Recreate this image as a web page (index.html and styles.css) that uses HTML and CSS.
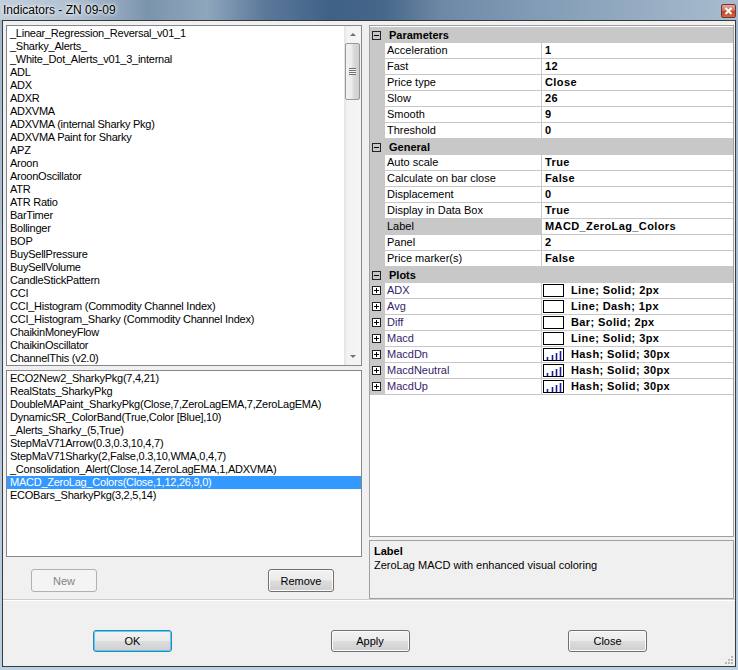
FILE: index.html
```html
<!DOCTYPE html>
<html>
<head>
    <meta charset="utf-8">
    <title>Indicators - ZN 09-09</title>
    <link rel="stylesheet" href="styles.css">
</head>
<body>
<div class="window">
    <div class="titlebar">
        <span class="title">Indicators - ZN 09-09</span>
        <span class="close-x">
            <svg width="15" height="14" viewBox="0 0 15 14"><path d="M4.5 4 L10.5 10 M10.5 4 L4.5 10" stroke="#fff" stroke-width="2"/></svg>
        </span>
    </div>
    <div class="client">
        <div class="panes">
            <div class="left">
                <div class="listbox available">
                    <div class="items">
                        <div class="item">_Linear_Regression_Reversal_v01_1</div>
                        <div class="item">_Sharky_Alerts_</div>
                        <div class="item">_White_Dot_Alerts_v01_3_internal</div>
                        <div class="item">ADL</div>
                        <div class="item">ADX</div>
                        <div class="item">ADXR</div>
                        <div class="item">ADXVMA</div>
                        <div class="item">ADXVMA (internal Sharky Pkg)</div>
                        <div class="item">ADXVMA Paint for Sharky</div>
                        <div class="item">APZ</div>
                        <div class="item">Aroon</div>
                        <div class="item">AroonOscillator</div>
                        <div class="item">ATR</div>
                        <div class="item">ATR Ratio</div>
                        <div class="item">BarTimer</div>
                        <div class="item">Bollinger</div>
                        <div class="item">BOP</div>
                        <div class="item">BuySellPressure</div>
                        <div class="item">BuySellVolume</div>
                        <div class="item">CandleStickPattern</div>
                        <div class="item">CCI</div>
                        <div class="item">CCI_Histogram (Commodity Channel Index)</div>
                        <div class="item">CCI_Histogram_Sharky (Commodity Channel Index)</div>
                        <div class="item">ChaikinMoneyFlow</div>
                        <div class="item">ChaikinOscillator</div>
                        <div class="item">ChannelThis (v2.0)</div>
                    </div>
                    <div class="vscroll">
                        <div class="arrow up"></div>
                        <div class="track">
                            <div class="thumb"><span class="grip"></span></div>
                        </div>
                        <div class="arrow down"></div>
                    </div>
                </div>
                <div class="listbox configured">
                    <div class="items">
                        <div class="item">ECO2New2_SharkyPkg(7,4,21)</div>
                        <div class="item">RealStats_SharkyPkg</div>
                        <div class="item">DoubleMAPaint_SharkyPkg(Close,7,ZeroLagEMA,7,ZeroLagEMA)</div>
                        <div class="item">DynamicSR_ColorBand(True,Color [Blue],10)</div>
                        <div class="item">_Alerts_Sharky_(5,True)</div>
                        <div class="item">StepMaV71Arrow(0.3,0.3,10,4,7)</div>
                        <div class="item">StepMaV71Sharky(2,False,0.3,10,WMA,0,4,7)</div>
                        <div class="item">_Consolidation_Alert(Close,14,ZeroLagEMA,1,ADXVMA)</div>
                        <div class="item selected">MACD_ZeroLag_Colors(Close,1,12,26,9,0)</div>
                        <div class="item">ECOBars_SharkyPkg(3,2,5,14)</div>
                    </div>
                </div>
                <div class="left-buttons">
                    <button class="btn disabled">New</button>
                    <button class="btn">Remove</button>
                </div>
            </div>

            <div class="right">
                <div class="grid">
                    <div class="cat">
                        <svg class="tog" width="9" height="9"><rect x="0.5" y="0.5" width="8" height="8" fill="none" stroke="#222"/><path d="M2 4.5h5" stroke="#000"/></svg>
                        <span>Parameters</span>
                    </div>
                    <div class="row"><span class="name">Acceleration</span><span class="val">1</span></div>
                    <div class="row"><span class="name">Fast</span><span class="val">12</span></div>
                    <div class="row"><span class="name">Price type</span><span class="val">Close</span></div>
                    <div class="row"><span class="name">Slow</span><span class="val">26</span></div>
                    <div class="row"><span class="name">Smooth</span><span class="val">9</span></div>
                    <div class="row"><span class="name">Threshold</span><span class="val">0</span></div>
                    <div class="cat">
                        <svg class="tog" width="9" height="9"><rect x="0.5" y="0.5" width="8" height="8" fill="none" stroke="#222"/><path d="M2 4.5h5" stroke="#000"/></svg>
                        <span>General</span>
                    </div>
                    <div class="row"><span class="name">Auto scale</span><span class="val">True</span></div>
                    <div class="row"><span class="name">Calculate on bar close</span><span class="val">False</span></div>
                    <div class="row"><span class="name">Displacement</span><span class="val">0</span></div>
                    <div class="row"><span class="name">Display in Data Box</span><span class="val">True</span></div>
                    <div class="row current"><span class="name">Label</span><span class="val">MACD_ZeroLag_Colors</span></div>
                    <div class="row"><span class="name">Panel</span><span class="val">2</span></div>
                    <div class="row"><span class="name">Price marker(s)</span><span class="val">False</span></div>
                    <div class="cat">
                        <svg class="tog" width="9" height="9"><rect x="0.5" y="0.5" width="8" height="8" fill="none" stroke="#222"/><path d="M2 4.5h5" stroke="#000"/></svg>
                        <span>Plots</span>
                    </div>
                    <div class="row plot">
                        <svg class="tog" width="9" height="9"><rect x="0.5" y="0.5" width="8" height="8" fill="#fff" stroke="#222"/><path d="M2 4.5h5M4.5 2v5" stroke="#000"/></svg>
                        <span class="name">ADX</span>
                        <span class="val"><svg class="swatch" width="21" height="13"><rect x="0.5" y="0.5" width="20" height="12" fill="#fff" stroke="#000"/></svg>Line; Solid; 2px</span>
                    </div>
                    <div class="row plot">
                        <svg class="tog" width="9" height="9"><rect x="0.5" y="0.5" width="8" height="8" fill="#fff" stroke="#222"/><path d="M2 4.5h5M4.5 2v5" stroke="#000"/></svg>
                        <span class="name">Avg</span>
                        <span class="val"><svg class="swatch" width="21" height="13"><rect x="0.5" y="0.5" width="20" height="12" fill="#fff" stroke="#000"/></svg>Line; Dash; 1px</span>
                    </div>
                    <div class="row plot">
                        <svg class="tog" width="9" height="9"><rect x="0.5" y="0.5" width="8" height="8" fill="#fff" stroke="#222"/><path d="M2 4.5h5M4.5 2v5" stroke="#000"/></svg>
                        <span class="name">Diff</span>
                        <span class="val"><svg class="swatch" width="21" height="13"><rect x="0.5" y="0.5" width="20" height="12" fill="#fff" stroke="#000"/></svg>Bar; Solid; 2px</span>
                    </div>
                    <div class="row plot">
                        <svg class="tog" width="9" height="9"><rect x="0.5" y="0.5" width="8" height="8" fill="#fff" stroke="#222"/><path d="M2 4.5h5M4.5 2v5" stroke="#000"/></svg>
                        <span class="name">Macd</span>
                        <span class="val"><svg class="swatch" width="21" height="13"><rect x="0.5" y="0.5" width="20" height="12" fill="#fff" stroke="#000"/></svg>Line; Solid; 3px</span>
                    </div>
                    <div class="row plot">
                        <svg class="tog" width="9" height="9"><rect x="0.5" y="0.5" width="8" height="8" fill="#fff" stroke="#222"/><path d="M2 4.5h5M4.5 2v5" stroke="#000"/></svg>
                        <span class="name">MacdDn</span>
                        <span class="val"><svg class="swatch" width="21" height="13"><rect x="0.5" y="0.5" width="20" height="12" fill="#fff" stroke="#000"/><path d="M4.5 12V9M9.5 12V7M13.5 12V5M17.5 12V3" stroke="#1c1c9a" stroke-width="1.6"/></svg>Hash; Solid; 30px</span>
                    </div>
                    <div class="row plot">
                        <svg class="tog" width="9" height="9"><rect x="0.5" y="0.5" width="8" height="8" fill="#fff" stroke="#222"/><path d="M2 4.5h5M4.5 2v5" stroke="#000"/></svg>
                        <span class="name">MacdNeutral</span>
                        <span class="val"><svg class="swatch" width="21" height="13"><rect x="0.5" y="0.5" width="20" height="12" fill="#fff" stroke="#000"/><path d="M4.5 12V9M9.5 12V7M13.5 12V5M17.5 12V3" stroke="#1c1c9a" stroke-width="1.6"/></svg>Hash; Solid; 30px</span>
                    </div>
                    <div class="row plot">
                        <svg class="tog" width="9" height="9"><rect x="0.5" y="0.5" width="8" height="8" fill="#fff" stroke="#222"/><path d="M2 4.5h5M4.5 2v5" stroke="#000"/></svg>
                        <span class="name">MacdUp</span>
                        <span class="val"><svg class="swatch" width="21" height="13"><rect x="0.5" y="0.5" width="20" height="12" fill="#fff" stroke="#000"/><path d="M4.5 12V9M9.5 12V7M13.5 12V5M17.5 12V3" stroke="#1c1c9a" stroke-width="1.6"/></svg>Hash; Solid; 30px</span>
                    </div>
                </div>
                <div class="desc">
                    <div class="desc-title">Label</div>
                    <div class="desc-text">ZeroLag MACD with enhanced visual coloring</div>
                </div>
            </div>
        </div>

        <div class="footer">
            <button class="btn wide ok">OK</button>
            <button class="btn wide">Apply</button>
            <button class="btn wide">Close</button>
            <svg class="grip-corner" width="8" height="8"><g fill="#b8b8b8"><rect x="6" y="0" width="2" height="2"/><rect x="3" y="3" width="2" height="2"/><rect x="6" y="3" width="2" height="2"/><rect x="0" y="6" width="2" height="2"/><rect x="3" y="6" width="2" height="2"/><rect x="6" y="6" width="2" height="2"/></g></svg>
        </div>
    </div>
</div>
</body>
</html>
```

FILE: styles.css
```css
* {
    box-sizing: border-box;
}
body {
    margin: 0;
    background: #b3c9de;
    font-family: "Liberation Sans", Arial, sans-serif;
    font-size: 11px;
    color: #000;
}
.window {
    width: 738px;
    height: 670px;
    background: linear-gradient(180deg, #9fb6cc, #bcd0e3);
}

/* title bar */
.titlebar {
    height: 20px;
    display: flex;
    align-items: center;
    justify-content: space-between;
    padding: 0 2px 0 3px;
    background: linear-gradient(90deg, #c3cfdb 0%, #b1c1d1 10%, #7b94ad 20%, #8fa6bc 28%, #5b7899 36%, #3f6186 45%, #476789 52%, #6e89a6 60%, #819bb5 72%, #94abc1 86%, #a9bccf 100%);
}
.title {
    font-size: 12px;
    color: #000;
    text-shadow: 0 0 5px #fff, 0 0 3px #fff;
}
.close-x {
    width: 15px;
    height: 14px;
    margin-top: 1px;
    border: 1px solid #6d3a33;
    border-radius: 2px;
    background: linear-gradient(180deg, #e5a595 0%, #d37462 45%, #c1432c 55%, #d5663f 100%);
    display: flex;
}
.close-x svg {
    margin: -1px;
}

/* client area */
.client {
    margin: 0 2px;
    height: 647px;
    border: 1px solid #3a3a3a;
    background: #f0f0f0;
}
.panes {
    height: 579px;
    display: flex;
    border-bottom: 1px solid #cdcdcd;
}
.left {
    width: 359px;
    padding: 4px 0 0 3px;
}
.right {
    width: 365px;
    margin-left: 7px;
    padding-top: 4px;
}

/* list boxes */
.listbox {
    width: 356px;
    border: 1px solid #828790;
    background: #fff;
    display: flex;
}
.available {
    height: 341px;
    padding-top: 1px;
}
.configured {
    height: 187px;
    margin-top: 4px;
    padding-top: 1px;
}
.items {
    flex: 1;
    overflow: hidden;
}
.item {
    height: 13px;
    line-height: 13px;
    padding-left: 3px;
    white-space: nowrap;
    letter-spacing: -0.25px;
}
.item.selected {
    background: #3399ff;
    color: #fff;
}

.vscroll {
    width: 17px;
    margin-top: -1px;
    display: flex;
    flex-direction: column;
    background: linear-gradient(90deg, #e3e3e3, #f3f3f3 20%, #f5f5f5);
}
.arrow {
    height: 17px;
    display: flex;
    align-items: center;
    justify-content: center;
}
.arrow::after {
    content: "";
    border-left: 3px solid transparent;
    border-right: 3px solid transparent;
}
.arrow.up::after {
    border-bottom: 3px solid #707070;
}
.arrow.down::after {
    border-top: 3px solid #707070;
}
.track {
    flex: 1;
}
.thumb {
    height: 57px;
    margin: 0 1px;
    border: 1px solid #979797;
    border-radius: 2px;
    background: linear-gradient(90deg, #f2f2f2, #ebebeb 45%, #dbdbdb 55%, #cfcfcf);
    display: flex;
    align-items: center;
    justify-content: center;
}
.grip {
    width: 7px;
    height: 7px;
    background: repeating-linear-gradient(180deg, #6e6e6e 0 1px, #f6f6f6 1px 2px);
}

.left-buttons {
    display: flex;
    justify-content: space-between;
    margin-top: 12px;
    padding: 0 28px 0 25px;
}

/* buttons */
.btn {
    width: 66px;
    height: 23px;
    font-family: "Liberation Sans", Arial, sans-serif;
    font-size: 11px;
    color: #000;
    border: 1px solid #707070;
    border-radius: 3px;
    background: linear-gradient(180deg, #f2f2f2 0%, #ebebeb 48%, #dddddd 52%, #cfcfcf 100%);
    box-shadow: inset 0 0 0 1px #fbfbfb;
    padding: 0;
}
.btn.disabled {
    color: #838383;
    border-color: #adb2b5;
    background: #f4f4f4;
    box-shadow: none;
}
.btn.wide {
    width: 79px;
    height: 22px;
}
.btn.ok {
    border-color: #3c7fb1;
    box-shadow: inset 0 0 0 1px #48d3f9;
}

/* property grid */
.grid {
    height: 512px;
    border: 1px solid #a0a0a0;
    background: #fff;
    padding-top: 1px;
}
.cat,
.row {
    height: 16px;
    display: flex;
    background: #c8c8c8;
}
.cat {
    align-items: center;
    font-weight: bold;
}
.cat .tog {
    margin: 0 8px 0 2px;
}
.row .name {
    width: 156px;
    height: 15px;
    line-height: 15px;
    margin-left: 15px;
    margin-right: 1px;
    padding-left: 2px;
    background: #fff;
}
.row .val {
    flex: 1;
    height: 15px;
    line-height: 15px;
    padding-left: 3px;
    background: #fff;
    font-weight: bold;
    letter-spacing: 0.4px;
    display: flex;
    align-items: center;
}
.row.current .name {
    background: #c8c8c8;
}
.row.plot .tog {
    margin: 3px 4px 0 2px;
}
.row.plot .name {
    margin-left: 0;
    color: #35246a;
}
.row.plot .val {
    padding-left: 1px;
}
.swatch {
    margin-right: 7px;
}

.desc {
    height: 59px;
    margin-top: 3px;
    border: 1px solid #a0a0a0;
    padding: 3px 4px;
    line-height: 14px;
}
.desc-title {
    font-weight: bold;
}

/* footer */
.footer {
    height: 66px;
    border-top: 1px solid #fff;
    padding: 29px 88px 0 90px;
    display: flex;
    justify-content: space-between;
    align-items: flex-start;
    position: relative;
}
.grip-corner {
    position: absolute;
    right: 2px;
    bottom: 2px;
}
```
